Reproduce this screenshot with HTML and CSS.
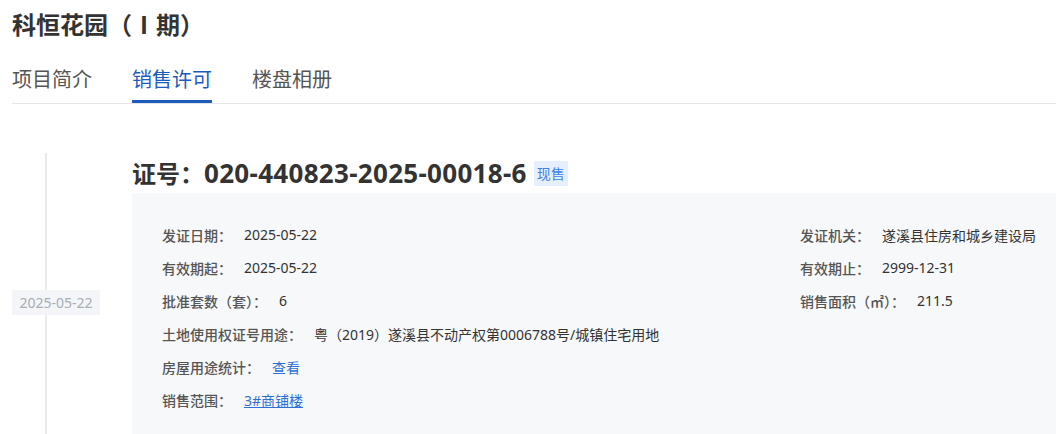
FILE: index.html
```html
<!DOCTYPE html>
<html>
<head>
    <meta charset="utf-8">
    <title>科恒花园（Ⅰ期）</title>
    <link rel="stylesheet" href="styles.css">
</head>
<body>
    <div class="page">
        <h1 class="title">科恒花园（Ⅰ期）</h1>
        <div class="tabs">
            <a class="tab">项目简介</a>
            <a class="tab active">销售许可</a>
            <a class="tab">楼盘相册</a>
        </div>

        <div class="record">
            <div class="timeline">
                <span class="date">2025-05-22</span>
            </div>
            <div class="record-body">
                <div class="cert-head">
                    <span class="cert-no">证号：<span class="num">020-440823-2025-00018-6</span></span>
                    <span class="tag">现售</span>
                </div>
                <div class="info">
                    <div class="row"><span class="label">发证日期：</span><span class="value">2025-05-22</span></div>
                    <div class="row"><span class="label">发证机关：</span><span class="value">遂溪县住房和城乡建设局</span></div>
                    <div class="row"><span class="label">有效期起：</span><span class="value">2025-05-22</span></div>
                    <div class="row"><span class="label">有效期止：</span><span class="value">2999-12-31</span></div>
                    <div class="row"><span class="label">批准套数（套）：</span><span class="value">6</span></div>
                    <div class="row"><span class="label">销售面积（㎡）：</span><span class="value">211.5</span></div>
                    <div class="row wide"><span class="label">土地使用权证号用途：</span><span class="value">粤（2019）遂溪县不动产权第0006788号/城镇住宅用地</span></div>
                    <div class="row wide"><span class="label">房屋用途统计：</span><a class="link">查看</a></div>
                    <div class="row wide"><span class="label">销售范围：</span><a class="link underline">3#商铺楼</a></div>
                </div>
            </div>
        </div>
    </div>
</body>
</html>
```

FILE: styles.css
```css
body {
    margin: 0;
    font-family: "Noto Sans", "Noto Sans CJK SC", sans-serif;
    color: #333;
    background-color: #fff;
}
.page {
    padding-left: 12px;
}
.title {
    margin: 0;
    padding-top: 8px;
    font-size: 24px;
    line-height: 34px;
    font-weight: 700;
    color: #333;
}
.tabs {
    display: flex;
    gap: 40px;
    margin-top: 24px;
    border-bottom: 1px solid #e4e6ea;
}
.tab {
    font-size: 20px;
    line-height: 28px;
    padding-bottom: 6px;
    border-bottom: 3px solid transparent;
    color: #555;
    cursor: pointer;
}
.tab.active {
    color: #1d5bbf;
    border-bottom-color: #1d5bbf;
}
.record {
    display: flex;
    margin-top: 49px;
}
.timeline {
    position: relative;
    width: 120px;
    flex-shrink: 0;
    display: flex;
    align-items: center;
}
.timeline::before {
    content: "";
    position: absolute;
    left: 33px;
    top: 0;
    bottom: 0;
    width: 2px;
    background-color: #e8eaee;
}
.date {
    position: relative;
    width: 88px;
    height: 25px;
    line-height: 25px;
    text-align: center;
    font-size: 14px;
    color: #a8adb6;
    background-color: #f3f5f8;
}
.record-body {
    flex: 1;
}
.cert-head {
    display: flex;
    align-items: center;
    gap: 7px;
    height: 40px;
}
.cert-no {
    font-size: 24px;
    line-height: 40px;
    font-weight: 700;
    color: #333;
}
.cert-no .num {
    font-size: 26px;
    letter-spacing: 0.3px;
}
.tag {
    padding: 0 3px;
    height: 25px;
    line-height: 25px;
    font-size: 14px;
    color: #3f82ea;
    background-color: #e6effd;
}
.info {
    display: grid;
    grid-template-columns: 638px 1fr;
    padding: 25px 0 35px 30px;
    background-color: #f7f8fa;
}
.row {
    display: flex;
    height: 33px;
    align-items: center;
    font-size: 14px;
}
.row.wide {
    grid-column: 1 / -1;
}
.label {
    margin-right: 12px;
    color: #555;
    font-weight: 500;
}
.value {
    color: #333;
}
.link {
    color: #2f6fd3;
    cursor: pointer;
}
.link.underline {
    text-decoration: underline;
}
```
